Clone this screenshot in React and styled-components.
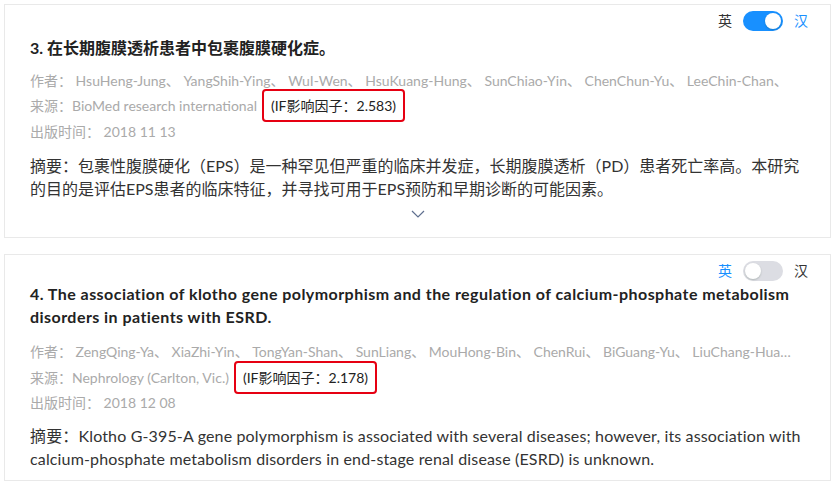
import React from 'react';
import styled, { createGlobalStyle } from 'styled-components';

const GlobalStyle = createGlobalStyle`
  html, body {
    margin: 0;
    padding: 0;
    background: #fff;
  }
  body {
    font-family: "Lato", "Noto Sans CJK SC", sans-serif;
    color: #333;
  }
`;

const List = styled.div`
  display: flex;
  flex-direction: column;
  gap: 16px;
  padding: 4px 9px 4px 4px;
`;

const Card = styled.div`
  border: 1px solid #e9e9e9;
  padding: 0 26px ${(p) => (p.$collapsible ? '13px' : '10px')} 25px;
`;

const CardHeader = styled.div`
  display: flex;
  justify-content: flex-end;
  align-items: center;
  gap: 11px;
  padding: 5px 0 0;
  margin-right: -4px;
  height: 22px;
`;

const LangLabel = styled.span`
  font-size: 14px;
  line-height: 22px;
  color: ${(p) => (p.$active ? '#1890ff' : '#333')};
`;

const Switch = styled.span`
  position: relative;
  display: inline-block;
  width: 40px;
  height: 20px;
  border-radius: 10px;
  background: ${(p) => (p.$on ? '#1890ff' : '#dcdde3')};
  &::after {
    content: '';
    position: absolute;
    top: 2px;
    left: ${(p) => (p.$on ? '22px' : '2px')};
    width: 16px;
    height: 16px;
    border-radius: 50%;
    background: #fff;
    box-shadow: 0 1px 2px rgba(0, 35, 11, 0.2);
  }
`;

const Title = styled.h3`
  margin: ${(p) => (p.$cn ? '5px 0 8px' : '1px 0 11px')};
  font-size: 16px;
  font-weight: 700;
  line-height: 22.5px;
  letter-spacing: ${(p) => (p.$cn ? '0' : '0.45px')};
  color: #222;
`;

const Meta = styled.div`
  font-size: 14px;
  line-height: 25.5px;
  color: #aaa;
  white-space: nowrap;
  overflow: ${(p) => (p.$clip ? 'hidden' : 'visible')};
  text-overflow: ellipsis;
`;

const Impact = styled.span`
  margin-left: 5px;
  padding: 6px 7px;
  border: 2px solid #e60012;
  border-radius: 4px;
  color: #222;
`;

const Abstract = styled.p`
  margin: ${(p) => (p.$cn ? '10px' : '8px')} 0 0;
  font-size: 16px;
  line-height: 23px;
  letter-spacing: ${(p) => (p.$cn ? '0' : '0.15px')};
  color: #333;
`;

const Expand = styled.div`
  display: flex;
  justify-content: center;
  padding-top: 10px;
  height: 14px;
  margin-left: 1px;
`;

const Chevron = () => (
  <svg width="14" height="8" viewBox="0 0 14 8">
    <polyline points="1,1 7,7 13,1" fill="none" stroke="#5f6f8f" strokeWidth="1.2" />
  </svg>
);

const papers = [
  {
    no: 3,
    title: '在长期腹膜透析患者中包裹腹膜硬化症。',
    authors: ['HsuHeng-Jung', 'YangShih-Ying', 'WuI-Wen', 'HsuKuang-Hung', 'SunChiao-Yin', 'ChenChun-Yu', 'LeeChin-Chan'],
    trailingMark: true,
    source: 'BioMed research international',
    impact: '2.583',
    date: '2018 11 13',
    abstract:
      '摘要：包裹性腹膜硬化（EPS）是一种罕见但严重的临床并发症，长期腹膜透析（PD）患者死亡率高。本研究的目的是评估EPS患者的临床特征，并寻找可用于EPS预防和早期诊断的可能因素。',
    chinese: true,
    collapsible: true,
  },
  {
    no: 4,
    title:
      'The association of klotho gene polymorphism and the regulation of calcium-phosphate metabolism disorders in patients with ESRD.',
    authors: ['ZengQing-Ya', 'XiaZhi-Yin', 'TongYan-Shan', 'SunLiang', 'MouHong-Bin', 'ChenRui', 'BiGuang-Yu', 'LiuChang-Hua', 'WangWei'],
    source: 'Nephrology (Carlton, Vic.)',
    impact: '2.178',
    date: '2018 12 08',
    abstract:
      '摘要：Klotho G-395-A gene polymorphism is associated with several diseases; however, its association with calcium-phosphate metabolism disorders in end-stage renal disease (ESRD) is unknown.',
    chinese: false,
    collapsible: false,
  },
];

const PaperCard = ({ paper }) => {
  const authorText = paper.authors.join('、 ') + (paper.trailingMark ? '、' : '');
  return (
    <Card $collapsible={paper.collapsible}>
      <CardHeader>
        <LangLabel $active={!paper.chinese}>英</LangLabel>
        <Switch $on={paper.chinese} />
        <LangLabel $active={paper.chinese}>汉</LangLabel>
      </CardHeader>
      <Title $cn={paper.chinese}>
        {paper.no}. {paper.title}
      </Title>
      <div>
        <Meta $clip>作者： {authorText}</Meta>
        <Meta>
          来源：{paper.source}
          <Impact>(IF影响因子：{paper.impact})</Impact>
        </Meta>
        <Meta>出版时间： {paper.date}</Meta>
      </div>
      <Abstract $cn={paper.chinese}>{paper.abstract}</Abstract>
      {paper.collapsible && (
        <Expand>
          <Chevron />
        </Expand>
      )}
    </Card>
  );
};

const App = () => (
  <>
    <GlobalStyle />
    <List>
      {papers.map((p) => (
        <PaperCard key={p.no} paper={p} />
      ))}
    </List>
  </>
);

export default App;
